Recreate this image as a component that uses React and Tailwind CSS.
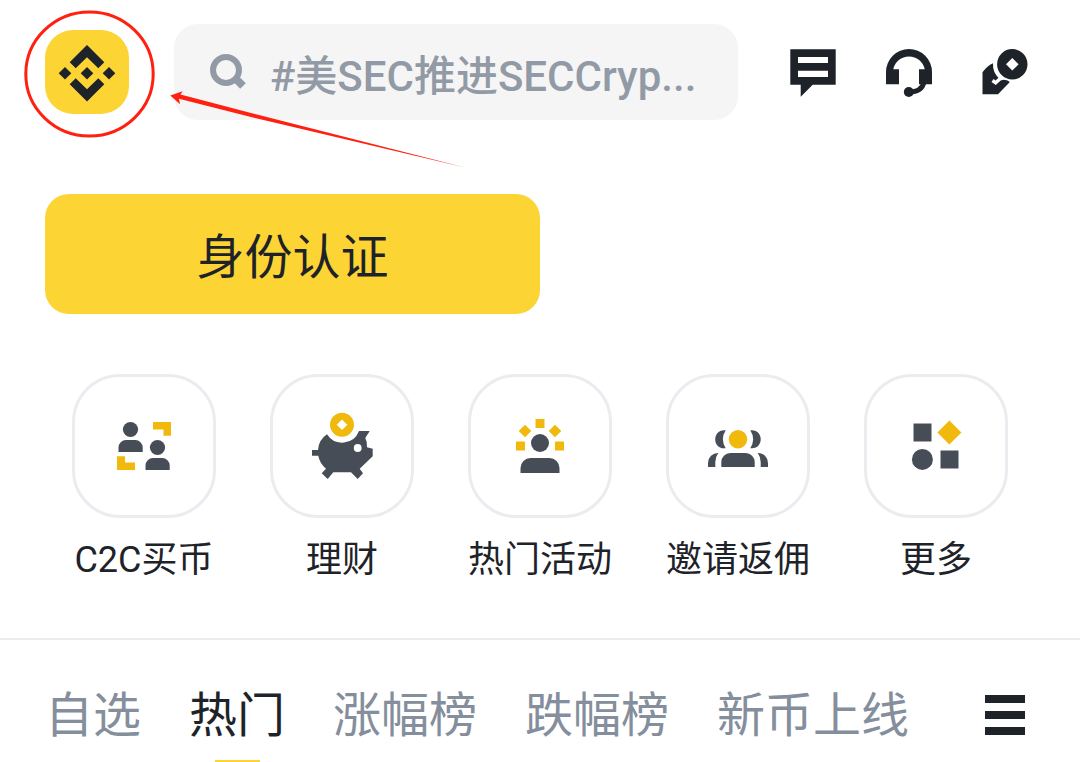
const shortcuts = [
  { label: "C2C买币", Icon: PeerTradeIcon },
  { label: "理财", Icon: PiggyIcon },
  { label: "热门活动", Icon: EventsIcon },
  { label: "邀请返佣", Icon: ReferralIcon },
  { label: "更多", Icon: MoreIcon },
];

const tabs = ["自选", "热门", "涨幅榜", "跌幅榜", "新币上线"];

function LogoIcon() {
  return (
    <svg viewBox="0 0 84 84" className="w-full h-full fill-[#1e2329]">
      <path d="M42 15 59.3 32.3 53.3 38.3 42 27.3 30.7 38.3 24.7 32.3Z" />
      <path d="M42 71.6 59.3 54.3 53.3 48.3 42 59.3 30.7 48.3 24.7 54.3Z" />
      <path d="M42 37 48.3 43.3 42 49.6 35.7 43.3Z" />
      <path d="M20 37 26.3 43.3 20 49.6 13.7 43.3Z" />
      <path d="M64 37 70.3 43.3 64 49.6 57.7 43.3Z" />
    </svg>
  );
}

function SearchIcon() {
  return (
    <svg viewBox="0 0 36 36" className="w-9 h-9 shrink-0 fill-none stroke-[#929aa5]">
      <circle cx="16" cy="16" r="13" strokeWidth="6" />
      <path d="M25 24 33 32" strokeWidth="8" />
    </svg>
  );
}

function ChatIcon() {
  return (
    <svg viewBox="0 0 60 60" className="w-15 h-15 fill-[#1e2329]">
      <path
        fillRule="evenodd"
        d="M7.3 7.3H52.7V42.7H29.7L17.7 54.7V42.7H7.3ZM15 15V21H45V15ZM15 28.7V35H45V28.7Z"
      />
    </svg>
  );
}

function SupportIcon() {
  return (
    <svg viewBox="0 0 60 60" className="w-15 h-15 fill-[#1e2329]">
      <path d="M7 42.3V30A23 23 0 0 1 53 30V42.3H40V27.3H45.7A16 16 0 0 0 14.3 27.3H20V42.3Z" />
      <circle cx="29.8" cy="50" r="5" />
      <path d="M30 50C38 50 43.5 47 45 40" className="fill-none stroke-[#1e2329]" strokeWidth="5" />
    </svg>
  );
}

function RewardIcon() {
  return (
    <svg viewBox="0 0 60 60" className="w-15 h-15 fill-[#1e2329]">
      <path d="M7.5 30.3Q12 24 18 21.3A19.7 19.7 0 0 0 24 36.5L36.3 38.5 23 52.3H7.5Z" />
      <path
        d="M17.5 38.5 20.7 40.8 24.5 37.3Q31 34 37 39.5"
        className="fill-none stroke-white"
        strokeWidth="3.5"
      />
      <path
        fillRule="evenodd"
        d="M22.1 22.3A15.2 15.2 0 1 1 52.5 22.3A15.2 15.2 0 1 1 22.1 22.3ZM37.3 16 31 22.3 37.3 28.6 43.6 22.3Z"
      />
    </svg>
  );
}

function PeerTradeIcon() {
  return (
    <svg viewBox="0 0 72 72" className="w-18 h-18 fill-[#474d57]">
      <circle cx="22.5" cy="19.5" r="7.6" />
      <path d="M10.5 42V37.5A7.5 7.5 0 0 1 18 30H27.2A7.5 7.5 0 0 1 34.7 37.5V42Z" />
      <circle cx="49.5" cy="37.5" r="7.6" />
      <path d="M37.5 60V55.5A7.5 7.5 0 0 1 45 48H54.2A7.5 7.5 0 0 1 61.7 55.5V60Z" />
      <path d="M45 12H63V25.7H55.5V19.5H45Z" className="fill-[#f0b90b]" />
      <path d="M9 46.3H17V52.5H27V60H9Z" className="fill-[#f0b90b]" />
    </svg>
  );
}

function PiggyIcon() {
  return (
    <svg viewBox="0 0 72 72" className="w-18 h-18 fill-[#474d57]">
      <path d="M21 24.3A18 18 0 0 0 53 21H63.7L59.3 28Q61.5 32 61 37.3L66.7 38.7V46.3L53.7 58.7 57 63.3 51.7 69 45 62.3H27.3L21.7 69 15.7 63.3 20 58.7Q13.5 53 12.3 45.7H6V40H12Q12.5 30 21 24.3Z" />
      <circle cx="51.7" cy="38" r="3.9" className="fill-white" />
      <path
        fillRule="evenodd"
        d="M24 14.8A12 12 0 1 1 48 14.8A12 12 0 1 1 24 14.8ZM36 9.5 30.7 14.8 36 20.1 41.3 14.8Z"
        className="fill-[#f0b90b]"
      />
    </svg>
  );
}

function EventsIcon() {
  return (
    <svg viewBox="0 0 72 72" className="w-18 h-18 fill-[#474d57]">
      <circle cx="36" cy="33" r="9" />
      <path d="M16.5 63V58A10 10 0 0 1 26.5 48H45.5A10 10 0 0 1 55.5 58V63Z" />
      <g className="fill-[#f0b90b]">
        <path d="M31.5 9H40.5V18H31.5Z" />
        <path d="M12 31.5H21V40.5H12Z" />
        <path d="M51 31.5H60V40.5H51Z" />
        <path d="M21 14.7 27.3 21 21 27.3 14.7 21Z" />
        <path d="M51 14.7 57.3 21 51 27.3 44.7 21Z" />
      </g>
    </svg>
  );
}

function ReferralIcon() {
  return (
    <svg viewBox="0 0 72 72" className="w-18 h-18 fill-[#474d57]">
      <path d="M23.7 20.3C9.8 18.5 9.8 40 23.7 38.2Q18 29.2 23.7 20.3Z" />
      <path d="M48.3 20.3C62.2 18.5 62.2 40 48.3 38.2Q54 29.2 48.3 20.3Z" />
      <path d="M6 57V53A10 10 0 0 1 16.3 43Q13.3 47 13.3 52V57Z" />
      <path d="M66 57V53A10 10 0 0 0 55.7 43Q58.7 47 58.7 52V57Z" />
      <path d="M19.3 57V52A9 9 0 0 1 28.3 43H43.7A9 9 0 0 1 52.7 52V57Z" />
      <circle cx="36" cy="29.3" r="9.2" className="fill-[#f0b90b]" />
    </svg>
  );
}

function MoreIcon() {
  return (
    <svg viewBox="0 0 72 72" className="w-18 h-18 fill-[#474d57]">
      <path d="M13.5 13.5H31.5V31.5H13.5Z" />
      <path d="M40.5 40.5H58.5V58.5H40.5Z" />
      <circle cx="22.4" cy="49.4" r="10.5" />
      <path d="M49.4 10.5 61.4 22.5 49.4 34.5 37.4 22.5Z" className="fill-[#f0b90b]" />
    </svg>
  );
}

function MenuIcon() {
  return (
    <svg viewBox="0 0 60 60" className="w-15 h-15 fill-[#1e2329]">
      <path d="M10 11H50V19H10ZM10 27H50V35H10ZM10 43H50V51H10Z" />
    </svg>
  );
}

// Hand-drawn callout that points at the profile logo
function Callout() {
  return (
    <svg
      viewBox="0 0 480 180"
      className="absolute top-0 left-0 w-[480px] h-[180px] pointer-events-none"
    >
      <ellipse cx="89.5" cy="74" rx="63.7" ry="62" className="fill-none stroke-[#ff2010]" strokeWidth="3" />
      <path
        d="M170.3 95.5 182.7 91.2 180.5 94.5 250 112.8 465 167.5 250 116.8 179 98.8 180 104.3Z"
        className="fill-[#ff2010]"
      />
    </svg>
  );
}

export default function App() {
  return (
    <div className="relative bg-white text-[#1e2329] font-['Roboto','Noto_Sans_CJK_SC',sans-serif]">
      <header className="flex items-center gap-[45px] px-[45px] pt-6">
        <button aria-label="Profile" className="w-21 h-21 shrink-0 rounded-[28px] bg-[#fcd535]">
          <LogoIcon />
        </button>
        <label className="flex items-center gap-6 flex-1 min-w-0 h-24 pl-9 pr-4 rounded-3xl bg-[#f5f5f5]">
          <SearchIcon />
          <input
            type="search"
            aria-label="Search"
            placeholder="#美SEC推进SECCryp..."
            className="w-full min-w-0 h-18 pt-2 bg-transparent text-[42px] font-medium outline-none placeholder:text-[#929aa5]"
          />
        </label>
        <nav className="flex gap-9 shrink-0">
          <button aria-label="Messages"><ChatIcon /></button>
          <button aria-label="Support"><SupportIcon /></button>
          <button aria-label="Rewards"><RewardIcon /></button>
        </nav>
      </header>

      <main>
        <div className="px-[45px] pt-[74px]">
          <button className="w-1/2 h-30 pt-2 rounded-3xl bg-[#fcd535] text-5xl">身份认证</button>
        </div>

        <div className="grid grid-cols-5 px-[45px] pt-15 pb-[51px]">
          {shortcuts.map(({ label, Icon }) => (
            <button key={label} className="flex flex-col items-center gap-[15px]">
              <span className="flex items-center justify-center w-36 h-36 rounded-[48px] border-3 border-[#eaecef]">
                <Icon />
              </span>
              <span className="text-4xl leading-[54px] whitespace-nowrap">{label}</span>
            </button>
          ))}
        </div>

        <div className="flex items-start justify-between border-t-2 border-[#eaecef] px-[45px] pt-10">
          <div role="tablist" className="flex gap-12">
            {tabs.map((tab) => (
              <button
                key={tab}
                role="tab"
                aria-selected={tab === "热门"}
                className="flex flex-col items-center gap-2 text-5xl leading-[72px] whitespace-nowrap text-[#848e9c] aria-selected:text-[#1e2329]"
              >
                {tab}
                {tab === "热门" && <span className="w-[45px] h-0.5 bg-[#fcd535]" />}
              </button>
            ))}
          </div>
          <button aria-label="Menu" className="mt-1">
            <MenuIcon />
          </button>
        </div>
      </main>

      <Callout />
    </div>
  );
}
